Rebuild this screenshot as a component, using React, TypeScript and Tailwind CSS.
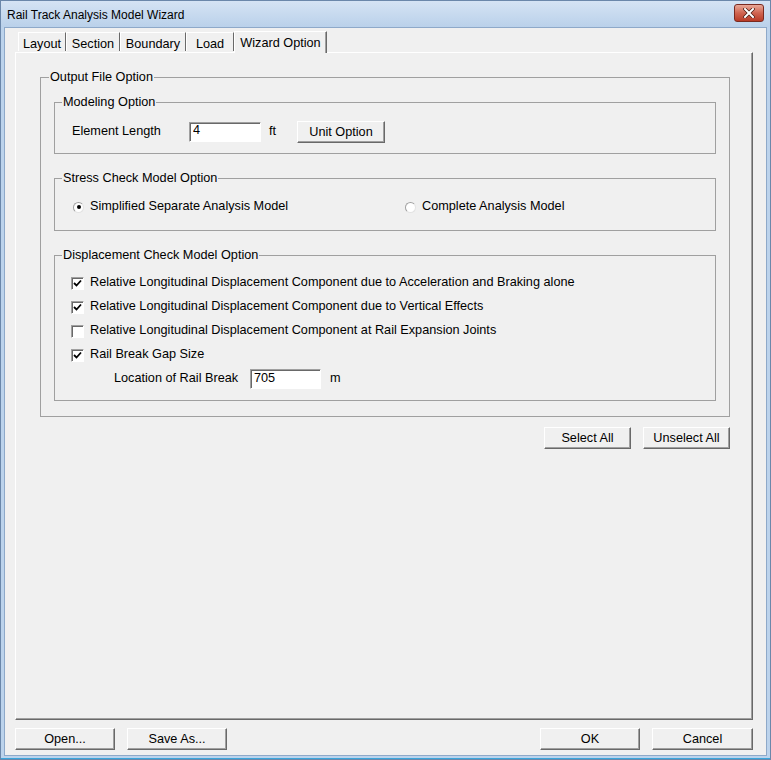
import React from "react";

function Btn({ label, className }: { label: string; className: string }) {
  return (
    <button
      type="button"
      className={
        "h-[22px] bg-[#f0f0f0] border border-t-white border-l-white border-r-[#696969] border-b-[#696969] shadow-[inset_-1px_-1px_0_#a0a0a0] text-[12.7px] leading-[18px] text-black " +
        className
      }
    >
      {label}
    </button>
  );
}

function TextBox({ value, className }: { value: string; className: string }) {
  return (
    <input
      type="text"
      defaultValue={value}
      className={
        "h-[20px] bg-white border border-t-[#a0a0a0] border-l-[#a0a0a0] border-r-white border-b-white shadow-[inset_1px_1px_0_#696969] pl-[3px] pb-[3px] text-[12.7px] leading-[14px] text-black outline-none " +
        className
      }
    />
  );
}

function Check({ checked, label }: { checked: boolean; label: string }) {
  return (
    <div className="h-[24px] flex items-center pl-[16px]">
      <span className="w-[13px] h-[13px] bg-white border border-t-[#a0a0a0] border-l-[#a0a0a0] border-r-white border-b-white shadow-[inset_1px_1px_0_#696969] flex items-center justify-center">
        {checked && (
          <svg width="9" height="9" viewBox="0 0 9 9">
            <path d="M1 4 L3.5 6.5 L8 1.5" fill="none" stroke="#000" strokeWidth="1.8" />
          </svg>
        )}
      </span>
      <span className="ml-[6px]">{label}</span>
    </div>
  );
}

function Radio({ checked, label }: { checked: boolean; label: string }) {
  return (
    <div className="flex items-center">
      <span className="w-[11px] h-[11px] rounded-full bg-white border border-t-[#a0a0a0] border-l-[#a0a0a0] border-r-[#e3e3e3] border-b-[#e3e3e3] flex items-center justify-center">
        {checked && <span className="w-[4px] h-[4px] rounded-full bg-black" />}
      </span>
      <span className="ml-[6px]">{label}</span>
    </div>
  );
}

function Group({
  title,
  className,
  legendClass = "ml-[7px]",
  children,
}: {
  title: string;
  className: string;
  legendClass?: string;
  children: React.ReactNode;
}) {
  return (
    <fieldset className={"border border-[#a0a0a0] " + className}>
      <legend className={"px-[1px] leading-[14px] " + legendClass}>{title}</legend>
      {children}
    </fieldset>
  );
}

const tabs = [
  { name: "Layout", w: "w-[48px]" },
  { name: "Section", w: "w-[54px]" },
  { name: "Boundary", w: "w-[66px]" },
  { name: "Load", w: "w-[48px]" },
];

export default function App() {
  return (
    <div className="w-[771px] h-[760px] flex flex-col bg-[#bcd3ec] border border-[#6b87aa] text-[12.7px] text-black font-['Liberation_Sans',Arial,sans-serif]">
      {/* title bar */}
      <div className="h-[26px] flex items-center justify-between bg-gradient-to-b from-[#d5e3f4] to-[#bad1ea] pl-[6px] pr-[6px]">
        <span className="pt-[1px] text-[12px]">Rail Track Analysis Model Wizard</span>
        <span className="w-[30px] h-[18px] mb-[2px] rounded-[3px] border border-[#7a2a20] bg-gradient-to-b from-[#e8a898] via-[#d06450] to-[#b83a26] flex items-center justify-center">
          <svg width="12" height="10" viewBox="0 0 12 10">
            <path d="M2 1 L10 9 M10 1 L2 9" stroke="#4a1a10" strokeWidth="3.4" strokeLinecap="square" />
            <path d="M2 1 L10 9 M10 1 L2 9" stroke="#fff" strokeWidth="2" strokeLinecap="square" />
          </svg>
        </span>
      </div>

      {/* client */}
      <div className="flex-1 mx-[3px] mb-[2px] bg-[#f0f0f0] border border-[#8ea9c9] flex flex-col pt-[3px]">
        {/* tabs */}
        <div className="flex items-end h-[21px] pl-[13px] relative z-10">
          {tabs.map(t => (
            <div
              key={t.name}
              className={"h-[19px] mb-[1px] border-t border-l border-r border-t-white border-l-white border-r-[#696969] flex items-start justify-center pt-[2px] " + t.w}
            >
              {t.name}
            </div>
          ))}
          <div className="h-[22px] -mb-[1px] w-[93px] bg-[#f0f0f0] border-t border-l border-r border-t-white border-l-white border-r-[#696969] shadow-[inset_-1px_0_0_#a0a0a0] flex items-start justify-center pt-[2px]">
            Wizard Option
          </div>
        </div>

        {/* panel */}
        <div className="h-[668px] ml-[10px] mr-[13px] border border-t-white border-l-white border-r-[#696969] border-b-[#696969] shadow-[inset_-1px_-1px_0_#a0a0a0] flex flex-col pl-[24px] pt-[17px]">
          <Group title="Output File Option" className="w-[690px] px-[13px] pb-[15px]" legendClass="-ml-[5px]">
            <Group title="Modeling Option" className="mt-[11px] pb-[11px]">
              <div className="mt-[12px] h-[21px] flex items-center pl-[17px]">
                <span className="w-[117px]">Element Length</span>
                <TextBox value="4" className="w-[72px]" />
                <span className="ml-[8px] w-[28px]">ft</span>
                <Btn label="Unit Option" className="w-[88px]" />
              </div>
            </Group>

            <Group title="Stress Check Model Option" className="mt-[17px] pb-[15px]">
              <div className="mt-[14px] h-[16px] flex items-center pl-[18px]">
                <div className="w-[332px]">
                  <Radio checked label="Simplified Separate Analysis Model" />
                </div>
                <Radio checked={false} label="Complete Analysis Model" />
              </div>
            </Group>

            <Group title="Displacement Check Model Option" className="mt-[17px] pb-[9px]">
              <div className="mt-[9px] flex flex-col">
                <Check checked label="Relative Longitudinal Displacement Component due to Acceleration and Braking alone" />
                <Check checked label="Relative Longitudinal Displacement Component due to Vertical Effects" />
                <Check checked={false} label="Relative Longitudinal Displacement Component at Rail Expansion Joints" />
                <Check checked label="Rail Break Gap Size" />
                <div className="h-[24px] flex items-center pl-[59px]">
                  <span className="w-[136px]">Location of Rail Break</span>
                  <TextBox value="705" className="w-[71px]" />
                  <span className="ml-[9px]">m</span>
                </div>
              </div>
            </Group>
          </Group>

          <div className="w-[690px] mt-[10px] flex justify-end gap-[12px]">
            <Btn label="Select All" className="w-[87px]" />
            <Btn label="Unselect All" className="w-[87px]" />
          </div>
        </div>

        {/* bottom buttons */}
        <div className="mt-[8px] ml-[10px] mr-[13px] flex">
          <Btn label="Open..." className="w-[100px]" />
          <Btn label="Save As..." className="w-[100px] ml-[12px]" />
          <div className="flex-1" />
          <Btn label="OK" className="w-[100px]" />
          <Btn label="Cancel" className="w-[101px] ml-[12px]" />
        </div>
      </div>
      <div className="h-[1px] bg-[#3aa6dc]" />
    </div>
  );
}
